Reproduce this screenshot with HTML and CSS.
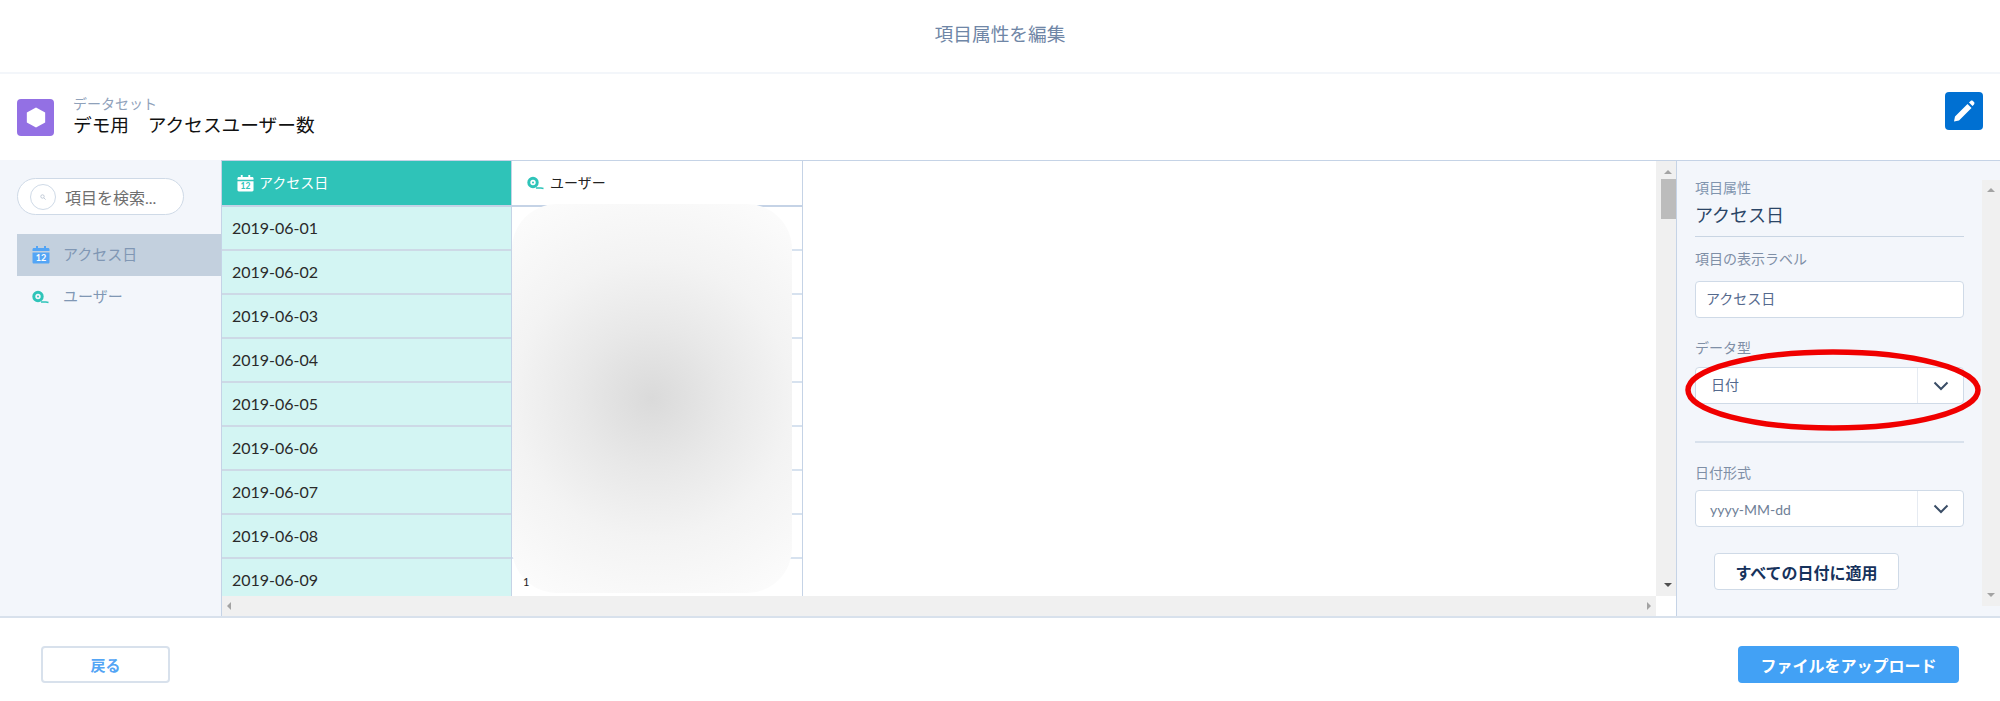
FILE: index.html
```html
<!doctype html>
<html lang="ja">
	<head>
		<meta charset="utf-8">
		<title>項目属性を編集</title>
		<link rel="stylesheet" href="styles.css">
	</head>
	<body>
		<header class="title-bar">項目属性を編集</header>

		<section class="dataset-bar">
			<span class="dataset-icon">
				<svg width="20" height="23" viewBox="0 0 24 26"><path d="M12 1 L23 7 V19 L12 25 L1 19 V7 Z" fill="#fff"/></svg>
			</span>
			<div class="dataset-text">
				<div class="dataset-kicker">データセット</div>
				<div class="dataset-name">デモ用　アクセスユーザー数</div>
			</div>
			<span class="edit-button">
				<svg width="24" height="24" viewBox="0 0 24 24"><path d="M3 17.5 L15.5 5 L19.5 9 L7 21.5 L2 22.5 Z M17 3.5 L18.6 2 C19.3 1.4 20.2 1.4 20.9 2 L22 3.1 C22.6 3.8 22.6 4.7 22 5.4 L20.5 7 Z" fill="#fff"/></svg>
			</span>
		</section>

		<main class="workspace">
			<aside class="sidebar">
				<div class="search">
					<span class="search-circle">
						<svg width="6" height="6" viewBox="0 0 6 6"><circle cx="2.5" cy="2.5" r="1.7" fill="none" stroke="#b4bfce" stroke-width="0.8"/><path d="M4 4 L5.6 5.6" stroke="#b4bfce" stroke-width="0.8"/></svg>
					</span>
					<span class="search-text">項目を検索...</span>
				</div>
				<div class="field-item selected">
					<svg class="field-icon" width="18" height="18" viewBox="0 0 18 18"><path d="M4 0 H6 V2 H12 V0 H14 V2 H16 C17 2 17.5 2.6 17.5 3.5 V5 H0.5 V3.5 C0.5 2.6 1 2 2 2 H4 Z M0.5 6.5 H17.5 V16 C17.5 17 17 17.5 16 17.5 H2 C1 17.5 0.5 17 0.5 16 Z" fill="#54a5f5"/><text x="9" y="15" class="cal-num" fill="#fff">12</text></svg>
					<span>アクセス日</span>
				</div>
				<div class="field-item">
					<svg class="field-icon" width="18" height="14" viewBox="0 0 18 14"><circle cx="6" cy="6.5" r="4.2" fill="none" stroke="#2ec4b9" stroke-width="3"/><circle cx="6" cy="6.5" r="1" fill="#2ec4b9"/><path d="M9 12 H14 L16.5 12.5" fill="none" stroke="#2ec4b9" stroke-width="1.6"/></svg>
					<span>ユーザー</span>
				</div>
			</aside>

			<div class="table-area">
				<div class="table-scroller">
					<div class="table">
						<div class="col col-date">
							<div class="col-head date-head">
								<svg width="17" height="17" viewBox="0 0 18 18"><path d="M4 0 H6 V2 H12 V0 H14 V2 H16 C17 2 17.5 2.6 17.5 3.5 V5 H0.5 V3.5 C0.5 2.6 1 2 2 2 H4 Z M0.5 6.5 H17.5 V16 C17.5 17 17 17.5 16 17.5 H2 C1 17.5 0.5 17 0.5 16 Z" fill="#fff"/><text x="9" y="15" class="cal-num" fill="#2ec4b9">12</text></svg>
								<span>アクセス日</span>
							</div>
							<div class="cell">2019-06-01</div>
							<div class="cell">2019-06-02</div>
							<div class="cell">2019-06-03</div>
							<div class="cell">2019-06-04</div>
							<div class="cell">2019-06-05</div>
							<div class="cell">2019-06-06</div>
							<div class="cell">2019-06-07</div>
							<div class="cell">2019-06-08</div>
							<div class="cell">2019-06-09</div>
						</div>
						<div class="col col-user">
							<div class="col-head user-head">
								<svg width="18" height="14" viewBox="0 0 18 14"><circle cx="6" cy="6.5" r="4.2" fill="none" stroke="#2ec4b9" stroke-width="3"/><circle cx="6" cy="6.5" r="1" fill="#2ec4b9"/><path d="M9 12 H14 L16.5 12.5" fill="none" stroke="#2ec4b9" stroke-width="1.6"/></svg>
								<span>ユーザー</span>
							</div>
							<div class="cell"></div>
							<div class="cell"></div>
							<div class="cell"></div>
							<div class="cell"></div>
							<div class="cell"></div>
							<div class="cell"></div>
							<div class="cell"></div>
							<div class="cell"></div>
							<div class="cell"></div>
							<div class="blur-blob"></div>
							<div class="blur-digit">1</div>
						</div>
					</div>
					<div class="vscroll">
						<span class="arrow up"></span>
						<span class="thumb"></span>
						<span class="arrow down"></span>
					</div>
				</div>
				<div class="hscroll">
					<span class="arrow left"></span>
					<span class="arrow right"></span>
				</div>
			</div>

			<aside class="panel">
				<div class="panel-body">
					<div class="panel-kicker">項目属性</div>
					<div class="panel-title">アクセス日</div>
					<label class="panel-label first">項目の表示ラベル</label>
					<div class="input"><span>アクセス日</span></div>
					<label class="panel-label type-label">データ型</label>
					<div class="select">
						<span class="select-value">日付</span>
						<span class="select-caret"><svg width="16" height="10" viewBox="0 0 16 10"><path d="M1.5 1.5 L8 8 L14.5 1.5" fill="none" stroke="#3a4d66" stroke-width="2"/></svg></span>
					</div>
					<hr class="panel-rule">
					<label class="panel-label">日付形式</label>
					<div class="select">
						<span class="select-value muted">yyyy-MM-dd</span>
						<span class="select-caret"><svg width="16" height="10" viewBox="0 0 16 10"><path d="M1.5 1.5 L8 8 L14.5 1.5" fill="none" stroke="#3a4d66" stroke-width="2"/></svg></span>
					</div>
					<button class="apply-button" type="button">すべての日付に適用</button>
				</div>
				<div class="panel-scroll">
					<span class="arrow up light"></span>
					<span class="arrow down light"></span>
				</div>
				<svg class="red-ring" width="300" height="84" viewBox="0 0 300 84"><ellipse cx="150" cy="42" rx="145" ry="38" fill="none" stroke="#f00000" stroke-width="5.5"/></svg>
			</aside>
		</main>

		<footer class="footer">
			<button class="back-button" type="button">戻る</button>
			<button class="upload-button" type="button">ファイルをアップロード</button>
		</footer>
	</body>
</html>
```

FILE: styles.css
```css
html, body {
	margin: 0;
	height: 701px;
	overflow: hidden;
}
body {
	display: flex;
	flex-direction: column;
	background-color: #fff;
	color: #16325c;
	font: 14px Lato, "Noto Sans CJK JP", sans-serif;
}
button {
	font: inherit;
	margin: 0;
	padding: 0;
}

.title-bar {
	height: 72px;
	line-height: 68px;
	text-align: center;
	font-size: 18.7px;
	color: #6f86a6;
	border-bottom: 2px solid #f3f6fa;
}

.dataset-bar {
	height: 86px;
	display: flex;
	align-items: center;
	padding: 0 17px;
}
.dataset-icon {
	width: 37px;
	height: 37px;
	border-radius: 4px;
	background-color: #9370e4;
	display: flex;
	align-items: center;
	justify-content: center;
}
.dataset-text {
	margin-left: 19px;
	flex: 1;
}
.dataset-kicker {
	font-size: 14px;
	line-height: 16px;
	color: #8fa1ba;
}
.dataset-name {
	font-size: 18.7px;
	line-height: 27px;
	color: #111;
}
.edit-button {
	width: 38px;
	height: 38px;
	margin-top: -12px;
	border-radius: 4px;
	background-color: #0070d2;
	display: flex;
	align-items: center;
	justify-content: center;
}

.workspace {
	height: 456px;
	display: flex;
	position: relative;
	background-color: #f3f6fb;
	border-bottom: 2px solid #d8e1ec;
}

.sidebar {
	width: 221px;
	flex: none;
	padding: 18px 0 0 17px;
	box-sizing: border-box;
}
.search {
	width: 167px;
	height: 37px;
	box-sizing: border-box;
	border: 1px solid #cfdae7;
	border-radius: 19px;
	background-color: #fff;
	display: flex;
	align-items: center;
	padding-left: 12px;
	margin-bottom: 19px;
}
.search-circle {
	width: 26px;
	height: 26px;
	box-sizing: border-box;
	border: 1px solid #cfdae7;
	border-radius: 50%;
	display: flex;
	align-items: center;
	justify-content: center;
	margin-right: 9px;
}
.search-text {
	font-size: 16px;
	color: #6f6f6f;
}
.field-item {
	height: 42px;
	display: flex;
	align-items: center;
	padding-left: 15px;
	font-size: 15px;
	color: #8097b4;
}
.field-item span {
	padding-bottom: 3px;
}
.field-item.selected {
	background-color: #c3d0de;
}
.field-icon {
	width: 18px;
	margin-right: 13px;
}
.cal-num {
	font: bold 9px Lato, sans-serif;
	text-anchor: middle;
}

.table-area {
	width: 1456px;
	flex: none;
	display: flex;
	flex-direction: column;
	background-color: #fff;
	border-top: 1px solid #c5d3e6;
	border-left: 1px solid #c5d3e6;
	border-right: 1px solid #c5d3e6;
	box-sizing: border-box;
}
.table-scroller {
	flex: 1;
	min-height: 0;
	display: flex;
}
.table {
	flex: 1;
	display: flex;
	overflow: hidden;
}
.col {
	width: 291px;
	flex: none;
	box-sizing: border-box;
	border-right: 1px solid #c5d3e6;
	position: relative;
}
.col-date {
	width: 290px;
	background-color: #d3f5f3;
}
.col-head {
	height: 46px;
	box-sizing: border-box;
	background-color: #fff;
	border-bottom: 2px solid #c5d3e6;
	display: flex;
	align-items: center;
	gap: 5px;
	padding: 0 0 0 15px;
	font-size: 14px;
	color: #222;
}
.col-head span {
	padding-bottom: 2px;
}
.date-head {
	background-color: #2fc3b8;
	color: #fff;
}
.cell {
	height: 44px;
	box-sizing: border-box;
	line-height: 42px;
	padding-left: 10px;
	font-size: 16px;
	color: #2a2a2a;
	border-bottom: 2px solid #cdd9e6;
}
.col-user .cell {
	border-bottom-color: #d7e2ef;
}
.blur-blob {
	position: absolute;
	left: 0;
	top: 43px;
	width: 280px;
	height: 389px;
	border-radius: 45px;
	background: radial-gradient(circle 240px at 50% 50%, #dadada, #e8e8e8 30%, #f3f3f3 58%, #f9f9f9 83%, #fdfdfd 100%);
}
.blur-digit {
	position: absolute;
	left: 11px;
	top: 414px;
	font-size: 11px;
	color: #222;
}

.vscroll {
	width: 20px;
	flex: none;
	background-color: #f0f0f0;
	display: flex;
	flex-direction: column;
	align-items: center;
	padding: 9px 0 9px 4px;
	box-sizing: border-box;
}
.thumb {
	width: 15px;
	height: 40px;
	margin-top: 5px;
	background-color: #bcbcbc;
}
.vscroll .down {
	margin-top: auto;
}
.hscroll {
	height: 20px;
	flex: none;
	margin-right: 20px;
	background-color: #f0f0f0;
	display: flex;
	align-items: center;
	justify-content: space-between;
	padding: 0 5px;
}
.arrow {
	width: 0;
	height: 0;
	display: block;
	border-style: solid;
	border-color: transparent;
}
.arrow.up {
	border-width: 0 4px 4px;
	border-bottom-color: #a3a3a3;
}
.arrow.down {
	border-width: 4px 4px 0;
	border-top-color: #505050;
}
.arrow.left {
	border-width: 4px 4px 4px 0;
	border-right-color: #a3a3a3;
}
.arrow.right {
	border-width: 4px 0 4px 4px;
	border-left-color: #a3a3a3;
}
.arrow.light.down {
	border-top-color: #a3a3a3;
	margin-top: auto;
}

.panel {
	flex: 1;
	display: flex;
	position: relative;
	border-top: 1px solid #c5d3e6;
}
.panel-body {
	flex: 1;
	padding: 20px 18px 0 18px;
	box-sizing: border-box;
}
.panel-kicker {
	line-height: 14px;
	color: #8094ae;
}
.panel-title {
	font-size: 18px;
	line-height: 26px;
	padding: 7px 0 8px;
	color: #2b4566;
	border-bottom: 1px solid #c9d5e3;
}
.panel-label {
	display: block;
	line-height: 18px;
	color: #7f8fa6;
	margin: 21px 0 8px;
}
.panel-label.first {
	margin: 13px 0 13px;
}
.panel-label.type-label {
	margin: 21px 0 10px;
}
.input, .select {
	height: 37px;
	box-sizing: border-box;
	border: 1px solid #cfdae7;
	border-radius: 4px;
	background-color: #fff;
	color: #54698d;
	display: flex;
	align-items: center;
}
.input {
	padding-left: 10px;
}
.input span {
	padding-bottom: 4px;
}
.select-value {
	flex: 1;
	padding: 0 0 4px 15px;
	color: #54698d;
}
.select-value.muted {
	padding: 1px 0 0 14px;
	color: #6f7f97;
}
.select-caret {
	width: 46px;
	height: 100%;
	border-left: 1px solid #e6ebf2;
	box-sizing: border-box;
	display: flex;
	align-items: center;
	justify-content: center;
}
.panel-rule {
	margin: 37px 0 21px;
	border: 0;
	border-top: 2px solid #d8e1ec;
}
.panel-rule + .panel-label {
	margin-top: 0;
}
.apply-button {
	display: block;
	width: 185px;
	height: 37px;
	margin: 26px 0 0 19px;
	border: 1px solid #cfdae7;
	border-radius: 4px;
	background-color: #fff;
	color: #16325c;
	font-weight: bold;
	font-size: 16px;
}
.panel-scroll {
	width: 18px;
	flex: none;
	margin: 19px 0 10px;
	background-color: #f0f0f0;
	display: flex;
	flex-direction: column;
	align-items: center;
	padding: 8px 0 9px;
	box-sizing: border-box;
}
.red-ring {
	position: absolute;
	left: 6px;
	top: 187px;
}

.footer {
	flex: 1;
	display: flex;
	justify-content: space-between;
	align-items: flex-start;
	padding: 28px 41px 0 41px;
}
.back-button, .upload-button {
	height: 37px;
	border-radius: 4px;
	font-weight: bold;
}
.back-button {
	width: 129px;
	border: 2px solid #d8e1ec;
	background-color: #fff;
	color: #54a5f5;
	font-size: 15px;
}
.upload-button {
	width: 221px;
	border: 0;
	background-color: #42a1f5;
	color: #fff;
	font-size: 16px;
}
```
